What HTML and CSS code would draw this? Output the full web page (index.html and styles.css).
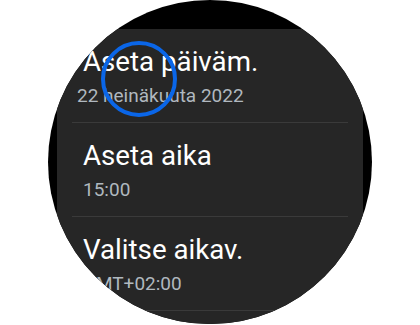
FILE: index.html
```html
<!DOCTYPE html>
<html lang="fi">
<head>
<meta charset="utf-8">
<title>Asetukset</title>
<link rel="stylesheet" href="styles.css">
</head>
<body>
<div class="stage">
  <div class="watch">
    <div class="panel">
      <div class="row">
        <div class="title">Aseta päiväm.</div>
        <div class="sub sub-scroll">22 heinäkuuta 2022</div>
      </div>
      <div class="row">
        <div class="title">Aseta aika</div>
        <div class="sub">15:00</div>
      </div>
      <div class="row">
        <div class="title">Valitse aikav.</div>
        <div class="sub">GMT+02:00</div>
      </div>
    </div>
  </div>
  <div class="highlight"></div>
</div>
</body>
</html>
```

FILE: styles.css
```css
html, body {
  margin: 0;
  padding: 0;
  background: #ffffff;
}

.stage {
  position: relative;
  width: 420px;
  height: 325px;
  overflow: hidden;
}

.watch {
  margin-left: 48px;
  width: 324px;
  height: 324px;
  border-radius: 50%;
  background: #000000;
  overflow: hidden;
  padding-top: 29px;
  box-sizing: border-box;
}

.panel {
  margin-left: 9px;
  width: 306px;
  height: 100%;
  background: #262626;
  padding: 0 15px;
  box-sizing: border-box;
  font-family: Roboto, "Noto Sans", sans-serif;
}

.row {
  height: 94px;
  box-sizing: border-box;
  border-bottom: 1px solid #3a3a3a;
  padding: 17px 0 0 11px;
  white-space: nowrap;
}

.title {
  color: #ffffff;
  font-size: 27.7px;
  line-height: 32px;
}

.sub {
  margin-top: 6px;
  color: #b0b8bf;
  font-size: 19px;
  line-height: 24px;
}

.sub-scroll {
  margin-left: -6px;
}

.highlight {
  position: absolute;
  left: 101px;
  top: 41px;
  width: 76px;
  height: 76px;
  box-sizing: border-box;
  border: 4px solid #0a66e8;
  border-radius: 50%;
}
```
